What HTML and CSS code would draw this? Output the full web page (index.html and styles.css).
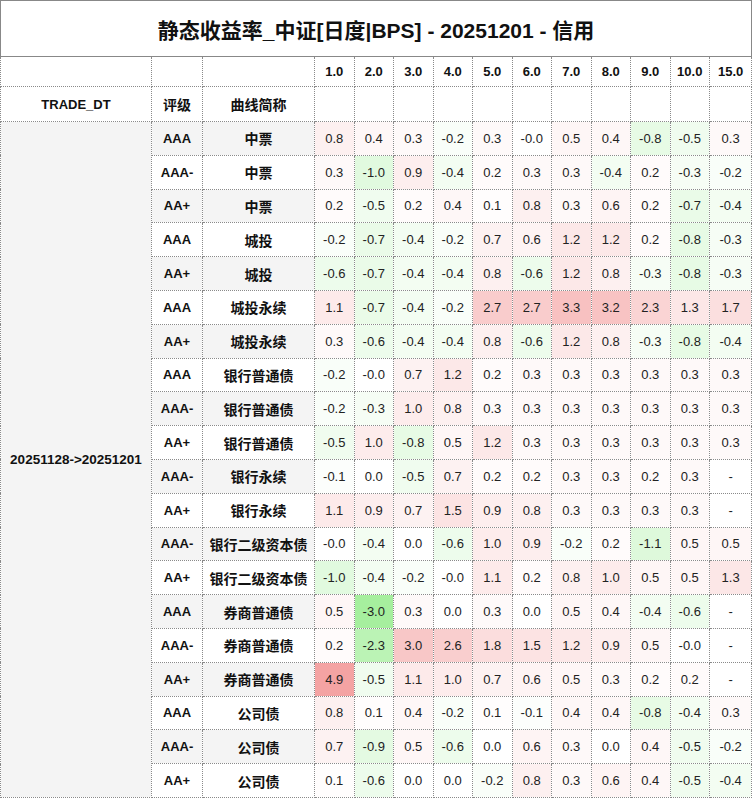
FILE: index.html
```html
<!DOCTYPE html>
<html lang="zh-CN">
<head>
<meta charset="utf-8">
<title>静态收益率_中证[日度|BPS] - 20251201 - 信用</title>
<link rel="stylesheet" href="styles.css">
</head>
<body>
<table class="grid">
<colgroup>
<col class="c-date"><col class="c-rate"><col class="c-curve">
<col class="c-v"><col class="c-v"><col class="c-v"><col class="c-v"><col class="c-v"><col class="c-v"><col class="c-v"><col class="c-v"><col class="c-v"><col class="c-v"><col class="c-last">
</colgroup>
<tr class="title-row"><td class="title" colspan="14">静态收益率_中证[日度|BPS] - 20251201 - 信用</td></tr>
<tr class="head1"><td></td><td></td><td></td><th>1.0</th><th>2.0</th><th>3.0</th><th>4.0</th><th>5.0</th><th>6.0</th><th>7.0</th><th>8.0</th><th>9.0</th><th>10.0</th><th>15.0</th></tr>
<tr class="head2"><th>TRADE_DT</th><th class="cn">评级</th><th class="cn">曲线简称</th><td></td><td></td><td></td><td></td><td></td><td></td><td></td><td></td><td></td><td></td><td></td></tr>

<tr class="odd"><td class="date" rowspan="20">20251128-&gt;20251201</td><td class="lbl">AAA</td><td class="lbl cn">中票</td><td class="p" style="--a:.8">0.8</td><td class="p" style="--a:.4">0.4</td><td class="p" style="--a:.3">0.3</td><td class="n" style="--a:.2">-0.2</td><td class="p" style="--a:.3">0.3</td><td>-0.0</td><td class="p" style="--a:.5">0.5</td><td class="p" style="--a:.4">0.4</td><td class="n" style="--a:.8">-0.8</td><td class="n" style="--a:.5">-0.5</td><td class="p" style="--a:.3">0.3</td></tr>
<tr><td class="lbl">AAA-</td><td class="lbl cn">中票</td><td class="p" style="--a:.3">0.3</td><td class="n" style="--a:1">-1.0</td><td class="p" style="--a:.9">0.9</td><td class="n" style="--a:.4">-0.4</td><td class="p" style="--a:.2">0.2</td><td class="p" style="--a:.3">0.3</td><td class="p" style="--a:.3">0.3</td><td class="n" style="--a:.4">-0.4</td><td class="p" style="--a:.2">0.2</td><td class="n" style="--a:.3">-0.3</td><td class="n" style="--a:.2">-0.2</td></tr>
<tr class="odd"><td class="lbl">AA+</td><td class="lbl cn">中票</td><td class="p" style="--a:.2">0.2</td><td class="n" style="--a:.5">-0.5</td><td class="p" style="--a:.2">0.2</td><td class="p" style="--a:.4">0.4</td><td class="p" style="--a:.1">0.1</td><td class="p" style="--a:.8">0.8</td><td class="p" style="--a:.3">0.3</td><td class="p" style="--a:.6">0.6</td><td class="p" style="--a:.2">0.2</td><td class="n" style="--a:.7">-0.7</td><td class="n" style="--a:.4">-0.4</td></tr>
<tr><td class="lbl">AAA</td><td class="lbl cn">城投</td><td class="n" style="--a:.2">-0.2</td><td class="n" style="--a:.7">-0.7</td><td class="n" style="--a:.4">-0.4</td><td class="n" style="--a:.2">-0.2</td><td class="p" style="--a:.7">0.7</td><td class="p" style="--a:.6">0.6</td><td class="p" style="--a:1.2">1.2</td><td class="p" style="--a:1.2">1.2</td><td class="p" style="--a:.2">0.2</td><td class="n" style="--a:.8">-0.8</td><td class="n" style="--a:.3">-0.3</td></tr>
<tr class="odd"><td class="lbl">AA+</td><td class="lbl cn">城投</td><td class="n" style="--a:.6">-0.6</td><td class="n" style="--a:.7">-0.7</td><td class="n" style="--a:.4">-0.4</td><td class="n" style="--a:.4">-0.4</td><td class="p" style="--a:.8">0.8</td><td class="n" style="--a:.6">-0.6</td><td class="p" style="--a:1.2">1.2</td><td class="p" style="--a:.8">0.8</td><td class="n" style="--a:.3">-0.3</td><td class="n" style="--a:.8">-0.8</td><td class="n" style="--a:.3">-0.3</td></tr>
<tr><td class="lbl">AAA</td><td class="lbl cn">城投永续</td><td class="p" style="--a:1.1">1.1</td><td class="n" style="--a:.7">-0.7</td><td class="n" style="--a:.4">-0.4</td><td class="n" style="--a:.2">-0.2</td><td class="p" style="--a:2.7">2.7</td><td class="p" style="--a:2.7">2.7</td><td class="p" style="--a:3.3">3.3</td><td class="p" style="--a:3.2">3.2</td><td class="p" style="--a:2.3">2.3</td><td class="p" style="--a:1.3">1.3</td><td class="p" style="--a:1.7">1.7</td></tr>
<tr class="odd"><td class="lbl">AA+</td><td class="lbl cn">城投永续</td><td class="p" style="--a:.3">0.3</td><td class="n" style="--a:.6">-0.6</td><td class="n" style="--a:.4">-0.4</td><td class="n" style="--a:.4">-0.4</td><td class="p" style="--a:.8">0.8</td><td class="n" style="--a:.6">-0.6</td><td class="p" style="--a:1.2">1.2</td><td class="p" style="--a:.8">0.8</td><td class="n" style="--a:.3">-0.3</td><td class="n" style="--a:.8">-0.8</td><td class="n" style="--a:.4">-0.4</td></tr>
<tr><td class="lbl">AAA</td><td class="lbl cn">银行普通债</td><td class="n" style="--a:.2">-0.2</td><td>-0.0</td><td class="p" style="--a:.7">0.7</td><td class="p" style="--a:1.2">1.2</td><td class="p" style="--a:.2">0.2</td><td class="p" style="--a:.3">0.3</td><td class="p" style="--a:.3">0.3</td><td class="p" style="--a:.3">0.3</td><td class="p" style="--a:.3">0.3</td><td class="p" style="--a:.3">0.3</td><td class="p" style="--a:.3">0.3</td></tr>
<tr class="odd"><td class="lbl">AAA-</td><td class="lbl cn">银行普通债</td><td class="n" style="--a:.2">-0.2</td><td class="n" style="--a:.3">-0.3</td><td class="p" style="--a:1">1.0</td><td class="p" style="--a:.8">0.8</td><td class="p" style="--a:.3">0.3</td><td class="p" style="--a:.3">0.3</td><td class="p" style="--a:.3">0.3</td><td class="p" style="--a:.3">0.3</td><td class="p" style="--a:.3">0.3</td><td class="p" style="--a:.3">0.3</td><td class="p" style="--a:.3">0.3</td></tr>
<tr><td class="lbl">AA+</td><td class="lbl cn">银行普通债</td><td class="n" style="--a:.5">-0.5</td><td class="p" style="--a:1">1.0</td><td class="n" style="--a:.8">-0.8</td><td class="p" style="--a:.5">0.5</td><td class="p" style="--a:1.2">1.2</td><td class="p" style="--a:.3">0.3</td><td class="p" style="--a:.3">0.3</td><td class="p" style="--a:.3">0.3</td><td class="p" style="--a:.3">0.3</td><td class="p" style="--a:.3">0.3</td><td class="p" style="--a:.3">0.3</td></tr>
<tr class="odd"><td class="lbl">AAA-</td><td class="lbl cn">银行永续</td><td class="n" style="--a:.1">-0.1</td><td>0.0</td><td class="n" style="--a:.5">-0.5</td><td class="p" style="--a:.7">0.7</td><td class="p" style="--a:.2">0.2</td><td class="p" style="--a:.2">0.2</td><td class="p" style="--a:.3">0.3</td><td class="p" style="--a:.3">0.3</td><td class="p" style="--a:.2">0.2</td><td class="p" style="--a:.3">0.3</td><td>-</td></tr>
<tr><td class="lbl">AA+</td><td class="lbl cn">银行永续</td><td class="p" style="--a:1.1">1.1</td><td class="p" style="--a:.9">0.9</td><td class="p" style="--a:.7">0.7</td><td class="p" style="--a:1.5">1.5</td><td class="p" style="--a:.9">0.9</td><td class="p" style="--a:.8">0.8</td><td class="p" style="--a:.3">0.3</td><td class="p" style="--a:.3">0.3</td><td class="p" style="--a:.3">0.3</td><td class="p" style="--a:.3">0.3</td><td>-</td></tr>
<tr class="odd"><td class="lbl">AAA-</td><td class="lbl cn">银行二级资本债</td><td>-0.0</td><td class="n" style="--a:.4">-0.4</td><td>0.0</td><td class="n" style="--a:.6">-0.6</td><td class="p" style="--a:1">1.0</td><td class="p" style="--a:.9">0.9</td><td class="n" style="--a:.2">-0.2</td><td class="p" style="--a:.2">0.2</td><td class="n" style="--a:1.1">-1.1</td><td class="p" style="--a:.5">0.5</td><td class="p" style="--a:.5">0.5</td></tr>
<tr><td class="lbl">AA+</td><td class="lbl cn">银行二级资本债</td><td class="n" style="--a:1">-1.0</td><td class="n" style="--a:.4">-0.4</td><td class="n" style="--a:.2">-0.2</td><td>-0.0</td><td class="p" style="--a:1.1">1.1</td><td class="p" style="--a:.2">0.2</td><td class="p" style="--a:.8">0.8</td><td class="p" style="--a:1">1.0</td><td class="p" style="--a:.5">0.5</td><td class="p" style="--a:.5">0.5</td><td class="p" style="--a:1.3">1.3</td></tr>
<tr class="odd"><td class="lbl">AAA</td><td class="lbl cn">券商普通债</td><td class="p" style="--a:.5">0.5</td><td class="n" style="--a:3">-3.0</td><td class="p" style="--a:.3">0.3</td><td>0.0</td><td class="p" style="--a:.3">0.3</td><td>0.0</td><td class="p" style="--a:.5">0.5</td><td class="p" style="--a:.4">0.4</td><td class="n" style="--a:.4">-0.4</td><td class="n" style="--a:.6">-0.6</td><td>-</td></tr>
<tr><td class="lbl">AAA-</td><td class="lbl cn">券商普通债</td><td class="p" style="--a:.2">0.2</td><td class="n" style="--a:2.3">-2.3</td><td class="p" style="--a:3">3.0</td><td class="p" style="--a:2.6">2.6</td><td class="p" style="--a:1.8">1.8</td><td class="p" style="--a:1.5">1.5</td><td class="p" style="--a:1.2">1.2</td><td class="p" style="--a:.9">0.9</td><td class="p" style="--a:.5">0.5</td><td>-0.0</td><td>-</td></tr>
<tr class="odd"><td class="lbl">AA+</td><td class="lbl cn">券商普通债</td><td class="p" style="--a:4.9">4.9</td><td class="n" style="--a:.5">-0.5</td><td class="p" style="--a:1.1">1.1</td><td class="p" style="--a:1">1.0</td><td class="p" style="--a:.7">0.7</td><td class="p" style="--a:.6">0.6</td><td class="p" style="--a:.5">0.5</td><td class="p" style="--a:.3">0.3</td><td class="p" style="--a:.2">0.2</td><td class="p" style="--a:.2">0.2</td><td>-</td></tr>
<tr><td class="lbl">AAA</td><td class="lbl cn">公司债</td><td class="p" style="--a:.8">0.8</td><td class="p" style="--a:.1">0.1</td><td class="p" style="--a:.4">0.4</td><td class="n" style="--a:.2">-0.2</td><td class="p" style="--a:.1">0.1</td><td class="n" style="--a:.1">-0.1</td><td class="p" style="--a:.4">0.4</td><td class="p" style="--a:.4">0.4</td><td class="n" style="--a:.8">-0.8</td><td class="n" style="--a:.4">-0.4</td><td class="p" style="--a:.3">0.3</td></tr>
<tr class="odd"><td class="lbl">AAA-</td><td class="lbl cn">公司债</td><td class="p" style="--a:.7">0.7</td><td class="n" style="--a:.9">-0.9</td><td class="p" style="--a:.5">0.5</td><td class="n" style="--a:.6">-0.6</td><td>0.0</td><td class="p" style="--a:.6">0.6</td><td class="p" style="--a:.3">0.3</td><td>0.0</td><td class="p" style="--a:.4">0.4</td><td class="n" style="--a:.5">-0.5</td><td class="n" style="--a:.2">-0.2</td></tr>
<tr><td class="lbl">AA+</td><td class="lbl cn">公司债</td><td class="p" style="--a:.1">0.1</td><td class="n" style="--a:.6">-0.6</td><td>0.0</td><td>0.0</td><td class="n" style="--a:.2">-0.2</td><td class="p" style="--a:.8">0.8</td><td class="p" style="--a:.3">0.3</td><td class="p" style="--a:.6">0.6</td><td class="p" style="--a:.4">0.4</td><td class="n" style="--a:.5">-0.5</td><td class="n" style="--a:.4">-0.4</td></tr>
</table>
</body>
</html>
```

FILE: styles.css
```css
html, body {
  margin: 0;
  padding: 0;
  background: #ffffff;
}

body {
  font-family: "Liberation Sans", Arial, "Noto Sans CJK SC", sans-serif;
  color: #222;
}

.grid {
  border-collapse: collapse;
  table-layout: fixed;
  width: 752px;
}

.c-date { width: 151px; }
.c-rate { width: 51px; }
.c-curve { width: 112px; }
.c-v { width: 39.5px; }
.c-last { width: 42px; }

.grid td,
.grid th {
  border: 1px dotted #8a8a8a;
  padding: 0;
  text-align: center;
  vertical-align: middle;
  font-size: 13px;
  height: 32.8px;
  white-space: nowrap;
  overflow: hidden;
}

.grid th {
  font-weight: bold;
  color: #111;
}

.grid .title {
  border: 1px solid #888;
  height: 55px;
  font-size: 21px;
  font-weight: bold;
  color: #111;
}

.head1 td, .head1 th { height: 29px; }
.head2 td, .head2 th { height: 34px; }

.grid .cn {
  font-size: 14px;
}

.lbl {
  font-weight: bold;
  color: #111;
  background: #ffffff;
}

.odd .lbl {
  background: #f4f4f4;
}

.grid .date {
  background: #f4f4f4;
  font-weight: bold;
  font-size: 13.5px;
  color: #111;
}

.p {
  background: color-mix(in srgb, #f4a3a3 calc(var(--a) * 20.4%), #ffffff);
}

.n {
  background: color-mix(in srgb, #a6ef9e calc(var(--a) * 33.3%), #ffffff);
}
```
